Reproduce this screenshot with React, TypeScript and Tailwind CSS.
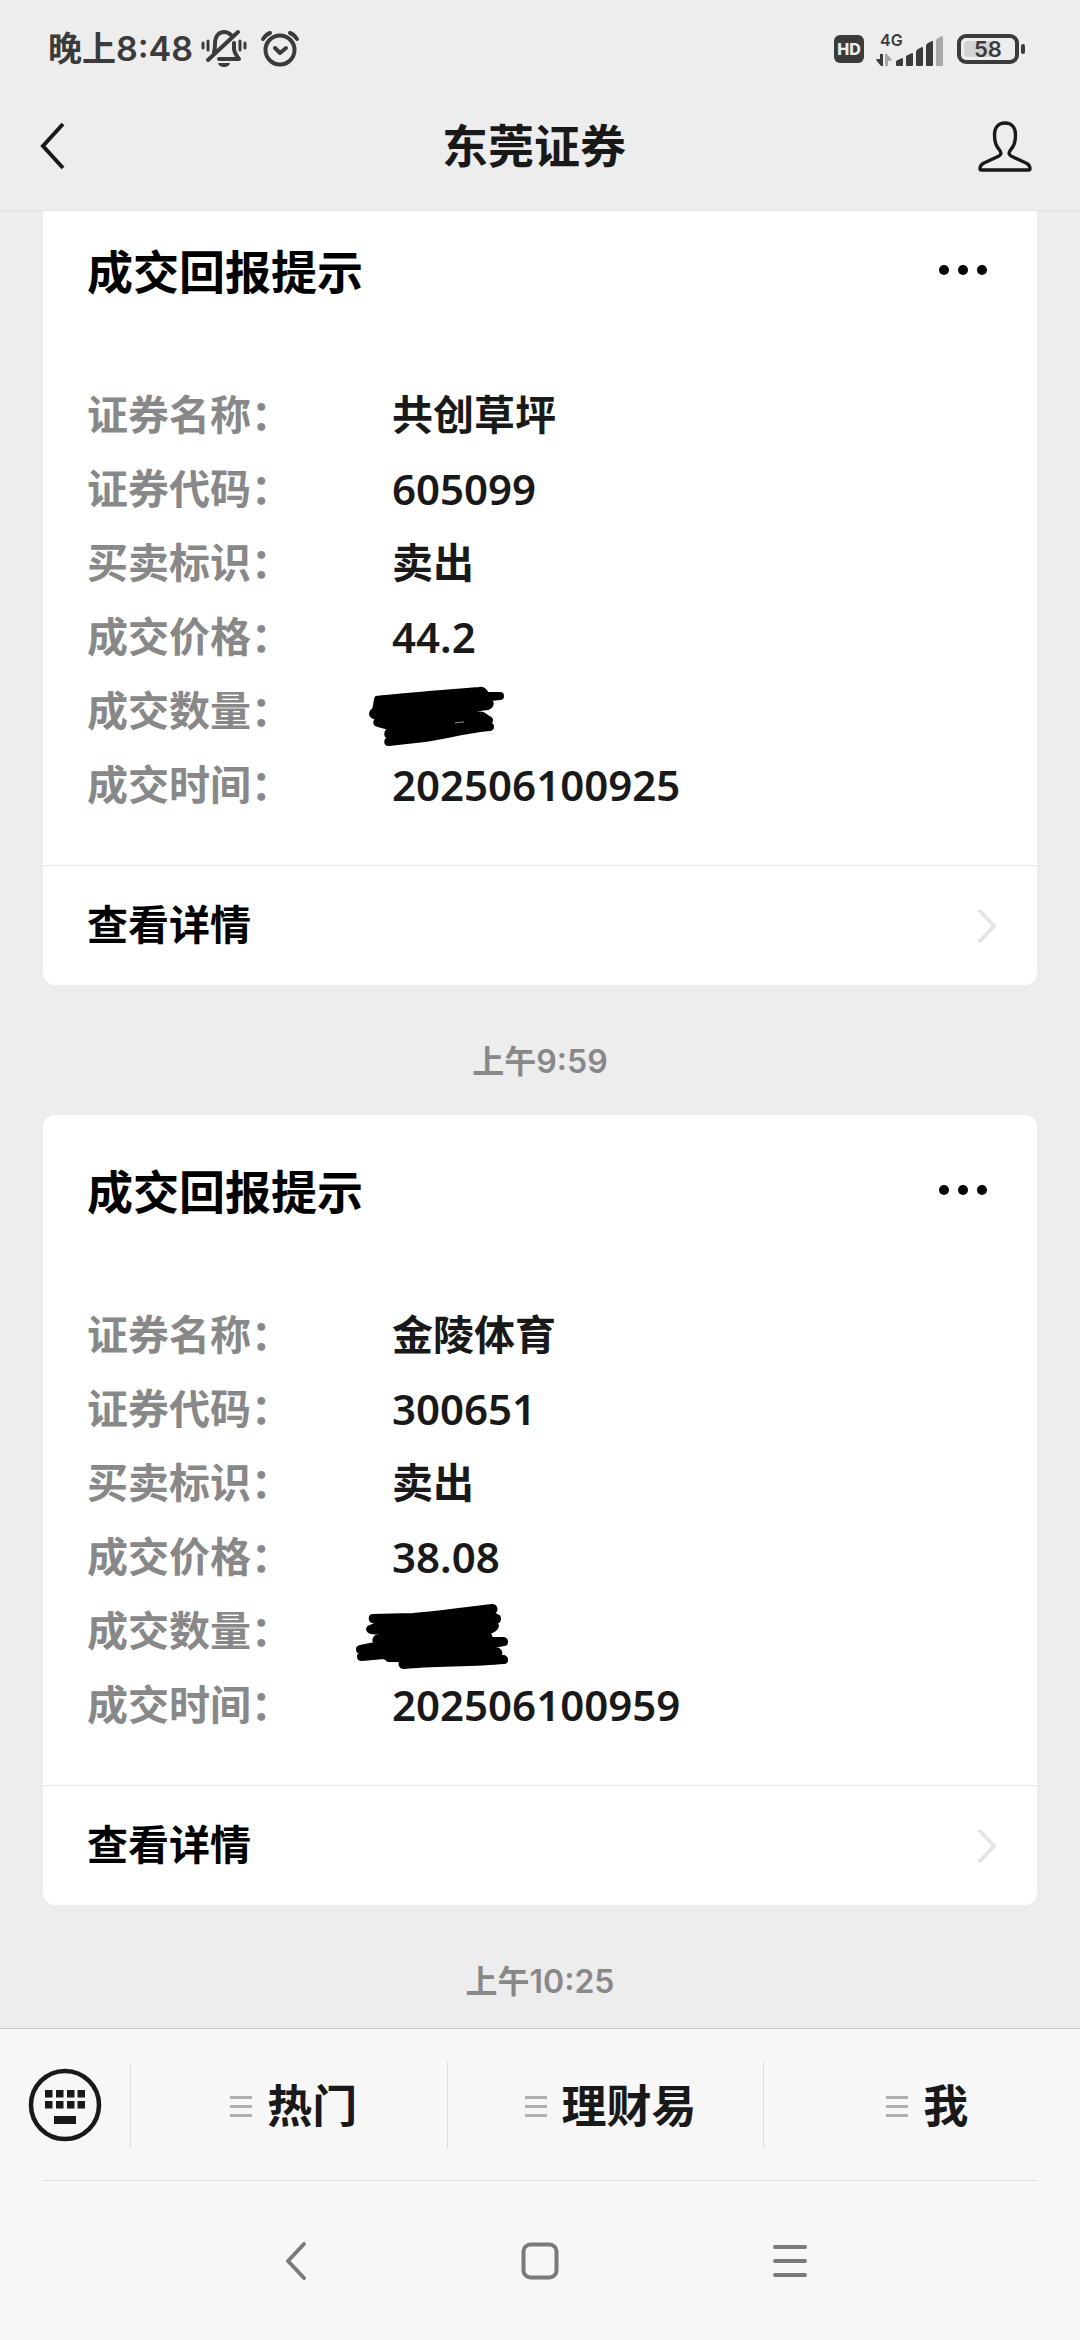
import React from "react";

const FONT = "font-['Inter','Noto_Sans_CJK_SC',sans-serif]";

function StatusBar() {
  return (
    <div className="flex h-[98px] items-center justify-between pl-12 pr-[55px] text-[#3b3b3b]">
      <div className="flex items-center">
        <span className="text-[34px] font-semibold leading-none">晚上8:48</span>
        <svg className="ml-2 h-10 w-[46px]" viewBox="0 0 46 40" fill="none" stroke="currentColor" strokeLinecap="round" strokeWidth="3">
          <path d="M2 14v5M7 12v9M39 12v9M44 14v5" />
          <path d="M13 23c1-3 1-5 1-8C14 7 18 3 23 3c3 0 5 1 7 3" strokeWidth="4" />
          <path d="M33 14v6c0 3 2 6 5 10H18" strokeWidth="4" strokeLinejoin="round" />
          <path d="M37 3 7 31" strokeWidth="4" />
          <path d="M17 34h12c-1 3-3 4-6 4s-5-1-6-4z" fill="currentColor" stroke="none" />
        </svg>
        <svg className="ml-3 h-10 w-[42px]" viewBox="0 0 42 40" fill="none" stroke="currentColor" strokeLinecap="round" strokeLinejoin="round" strokeWidth="4">
          <circle cx="21" cy="21" r="14.5" />
          <path d="m16 19 5 5 6-5M4 10c2-3 4-5 7-6M38 10c-2-3-4-5-7-6" />
        </svg>
      </div>
      <div className="flex items-center">
        <span className="flex h-7 w-[30px] items-center justify-center rounded-md bg-[#3b3b3b] text-[16px] font-extrabold leading-none text-[#ededed]">
          HD
        </span>
        <div className="ml-3 flex items-end">
          <div className="flex h-[34px] w-5 flex-col justify-between">
            <span className="pl-1 text-[16px] font-semibold leading-4">4G</span>
            <svg className="h-3 w-4" viewBox="0 0 16 12">
              <path d="M0 6l1-1h3V0h3v12H5z" fill="#3b3b3b" />
              <path d="M16 6l-1 1h-3v5H9V0h2z" fill="#a8a8a8" />
            </svg>
          </div>
          <svg className="h-[31px] w-12" viewBox="0 0 48 31" fill="currentColor">
            <path d="M0 27q0-2 2-2l4-2q1 0 1 1v6q0 1-1 1H1q-1 0-1-1z" />
            <path d="M10 22q0-2 2-2l4-2q1 0 1 1v11q0 1-1 1h-5q-1 0-1-1z" />
            <path d="M20 17q0-2 2-3l4-2q1 0 1 1v17q0 1-1 1h-5q-1 0-1-1z" />
            <path d="M30 11q0-2 2-3l4-2q1 0 1 1v23q0 1-1 1h-5q-1 0-1-1z" />
            <path d="M40 6q0-2 2-3l4-2q1 0 1 1v28q0 1-1 1h-5q-1 0-1-1z" fill="#a8a8a8" />
          </svg>
        </div>
        <div className="ml-[13px] flex items-center gap-0.5">
          <span className="flex h-[30px] w-[62px] items-center justify-center rounded-[9px] border-4 border-[#3b3b3b] p-[3px]">
            <span className="flex h-4 w-full items-center justify-center rounded-sm bg-[linear-gradient(90deg,#d3d3d3_58%,transparent_58%)] text-[22px] font-semibold leading-none">
              58
            </span>
          </span>
          <span className="h-[10px] w-1 rounded-full bg-[#3b3b3b]" />
        </div>
      </div>
    </div>
  );
}

function TitleBar() {
  return (
    <div className="grid h-[112px] grid-cols-[1fr_auto_1fr] items-start pt-[18px] text-[#191919]">
      <button type="button" aria-label="返回" className="ml-10 flex h-[60px] w-8 items-center">
        <svg className="h-12 w-[26px]" viewBox="0 0 26 48" fill="none" stroke="currentColor" strokeWidth="4">
          <path d="M23 2 3 24l20 22" />
        </svg>
      </button>
      <h1 className="pr-3 text-[46px] font-bold leading-[60px]">东莞证券</h1>
      <button type="button" aria-label="公众号资料" className="mr-12 flex h-[60px] items-center justify-self-end">
        <svg className="h-[52px] w-[54px]" viewBox="0 0 54 52" fill="none" stroke="currentColor" strokeLinejoin="round" strokeWidth="3.4">
          <path d="M27 3c7 0 10.500 5 10.500 11.500 0 8-1.500 11-5 15.500-2.500 3.500-1.500 5 1.500 6.500l14 6.500c3 1.500 4 3.500 4 5.500 0 1-.5 1.500-1.500 1.500h-47C2.500 50 2 49.500 2 48.500c0-2 1-4 4-5.500l14-6.500c3-1.500 4-3 1.500-6.500-3.500-4.500-5-7.500-5-15.500C16.500 8 20 3 27 3z" />
        </svg>
      </button>
    </div>
  );
}

function Scribble({ d, gap }: { d: string; gap?: string }) {
  return (
    <svg className="absolute -left-[51px] -top-[14px] h-[110px] w-[200px] max-w-none" viewBox="0 0 200 110" aria-hidden="true">
      <path d={d} stroke="#000" strokeWidth="2" strokeLinejoin="round" />
      {gap && <path d={gap} fill="none" stroke="#fff" strokeWidth="0.6" />}
    </svg>
  );
}

const scribbleA =
  "M35 37C70 33 105 31 138 28C142 27 144 29 147 33L159 33C163 33 163 39 159 39L150 40C153 43 152 47 147 49L131 51L142 53C145 54 146 56 150 58C152 60 151 62 149 63C153 65 153 69 149 70C125 72 105 78 84 81L48 85C43 85 43 79 48 78C43 77 43 71 48 69L37 66C32 65 32 60 37 59C28 58 27 53 32 49C34 45 33 39 35 37Z";
const scribbleB =
  "M31 35L72 34C100 32 125 28 151 25C156 25 157 31 153 33L156 35C160 36 160 41 156 43C158 46 157 50 149 53L151 58L163 58C167 59 167 65 163 65L153 67L158 69C161 71 161 74 159 76L163 76C167 77 167 83 163 83C130 86 95 85 62 88C58 87 58 84 59 81L47 81L43 78L21 80C16 80 16 75 19 73C15 72 15 67 19 66L34 63C31 61 32 56 39 54L30 53C25 52 25 47 29 46L37 43L31 42C28 41 28 36 31 35Z";

type Field = { label: string; value: React.ReactNode };

function Digits({ children }: { children: string }) {
  return <span className="font-['Noto_Sans',sans-serif] text-[42px]">{children}</span>;
}

function NoticeCard({ fields }: { fields: Field[] }) {
  return (
    <article className="mx-[43px] rounded-xl bg-white">
      <header className="flex h-[154px] items-center justify-between pl-11 pr-[50px]">
        <h2 className="text-[46px] font-bold leading-[60px] text-black">成交回报提示</h2>
        <button type="button" aria-label="更多" className="mb-1 flex gap-[9px]">
          <i className="size-[10px] rounded-full bg-black" />
          <i className="size-[10px] rounded-full bg-black" />
          <i className="size-[10px] rounded-full bg-black" />
        </button>
      </header>
      <dl className="px-11 pb-[43px] pt-[29px] text-[41px] font-semibold leading-[74px]">
        {fields.map((f) => (
          <div key={f.label} className="flex h-[74px]">
            <dt className="w-[305px] shrink-0 text-[#888888]">{f.label}：</dt>
            <dd className="relative text-[#191919]">{f.value}</dd>
          </div>
        ))}
      </dl>
      <a href="#detail" className="flex h-[120px] items-center justify-between border-t border-[#e5e5e5] pl-11 pr-10 text-[41px] font-semibold text-black">
        查看详情
        <svg className="h-9 w-5" viewBox="0 0 20 36" fill="none" stroke="#e5e5e5" strokeWidth="4">
          <path d="m2 2 15 16L2 34" />
        </svg>
      </a>
    </article>
  );
}

const first: Field[] = [
  { label: "证券名称", value: "共创草坪" },
  { label: "证券代码", value: <Digits>605099</Digits> },
  { label: "买卖标识", value: "卖出" },
  { label: "成交价格", value: <Digits>44.2</Digits> },
  { label: "成交数量", value: <Scribble d={scribbleA} gap="M114 63q4-1 9-1" /> },
  { label: "成交时间", value: <Digits>202506100925</Digits> },
];

const second: Field[] = [
  { label: "证券名称", value: "金陵体育" },
  { label: "证券代码", value: <Digits>300651</Digits> },
  { label: "买卖标识", value: "卖出" },
  { label: "成交价格", value: <Digits>38.08</Digits> },
  { label: "成交数量", value: <Scribble d={scribbleB} /> },
  { label: "成交时间", value: <Digits>202506100959</Digits> },
];

function MenuBar() {
  return (
    <div className="flex h-[151px] items-center">
      <button type="button" aria-label="切换到键盘" className="flex w-[130px] shrink-0 justify-center">
        <svg className="size-[74px]" viewBox="0 0 74 74" fill="#191919">
          <circle cx="37" cy="37" r="34" fill="none" stroke="#191919" strokeWidth="4.500" />
          <path d="M17 22h7.500v7.500H17zM28 22h7.500v7.500H28zM39 22h7.500v7.500H39zM49.500 22H57v7.500h-7.500zM17 33h7.500v7.500H17zM28 33h7.500v7.500H28zM39 33h7.500v7.500H39zM49.500 33H57v7.500h-7.500zM26 48h22v8H26z" />
        </svg>
      </button>
      {["热门", "理财易", "我"].map((name) => (
        <button
          key={name}
          type="button"
          className="flex h-[86px] flex-1 items-center justify-center gap-[15px] border-l border-[#dcdcdc] pl-2.5 pt-1 text-[45px] font-bold leading-none text-[#191919]"
        >
          <svg className="h-[21px] w-[22px]" viewBox="0 0 22 21" fill="#b0b0b0">
            <path d="M0 0h22v3H0zM0 9h22v3H0zM0 18h22v3H0z" />
          </svg>
          {name}
        </button>
      ))}
    </div>
  );
}

function SystemNav() {
  return (
    <nav className="flex h-[159px] items-center justify-center gap-[212px] pl-3 text-[#7a7a7a]">
      <button type="button" aria-label="后退">
        <svg className="h-10 w-6" viewBox="0 0 24 40" fill="none" stroke="currentColor" strokeWidth="4" strokeLinecap="round" strokeLinejoin="round">
          <path d="M20 3 4 20l16 17" />
        </svg>
      </button>
      <button type="button" aria-label="主屏幕">
        <svg className="size-10" viewBox="0 0 40 40" fill="none" stroke="currentColor" strokeWidth="4">
          <rect x="3.500" y="3.500" width="33" height="33" rx="7" />
        </svg>
      </button>
      <button type="button" aria-label="最近任务">
        <svg className="h-10 w-9" viewBox="0 0 36 40" fill="none" stroke="currentColor" strokeWidth="4" strokeLinecap="round">
          <path d="M3 6h30M3 20h30M3 34h30" />
        </svg>
      </button>
    </nav>
  );
}

export default function App() {
  return (
    <div className={`${FONT} flex min-h-screen flex-col bg-[#ededed]`} lang="zh-CN">
      <header className="border-b border-[#e2e2e2]">
        <StatusBar />
        <TitleBar />
      </header>
      <main className="flex-1 overflow-hidden">
        <div className="-mt-4">
          <NoticeCard fields={first} />
          <p className="pb-9 pt-[60px] text-center text-[32px] font-semibold leading-[34px] text-[#888888]">上午9:59</p>
          <NoticeCard fields={second} />
          <p className="pb-4 pt-[60px] text-center text-[32px] font-semibold leading-[34px] text-[#888888]">上午10:25</p>
        </div>
      </main>
      <footer className="border-t border-[#c8c8c8] bg-[#f7f7f7]">
        <MenuBar />
        <div className="mx-[43px] border-t border-[#dcdcdc]" />
        <SystemNav />
      </footer>
    </div>
  );
}
